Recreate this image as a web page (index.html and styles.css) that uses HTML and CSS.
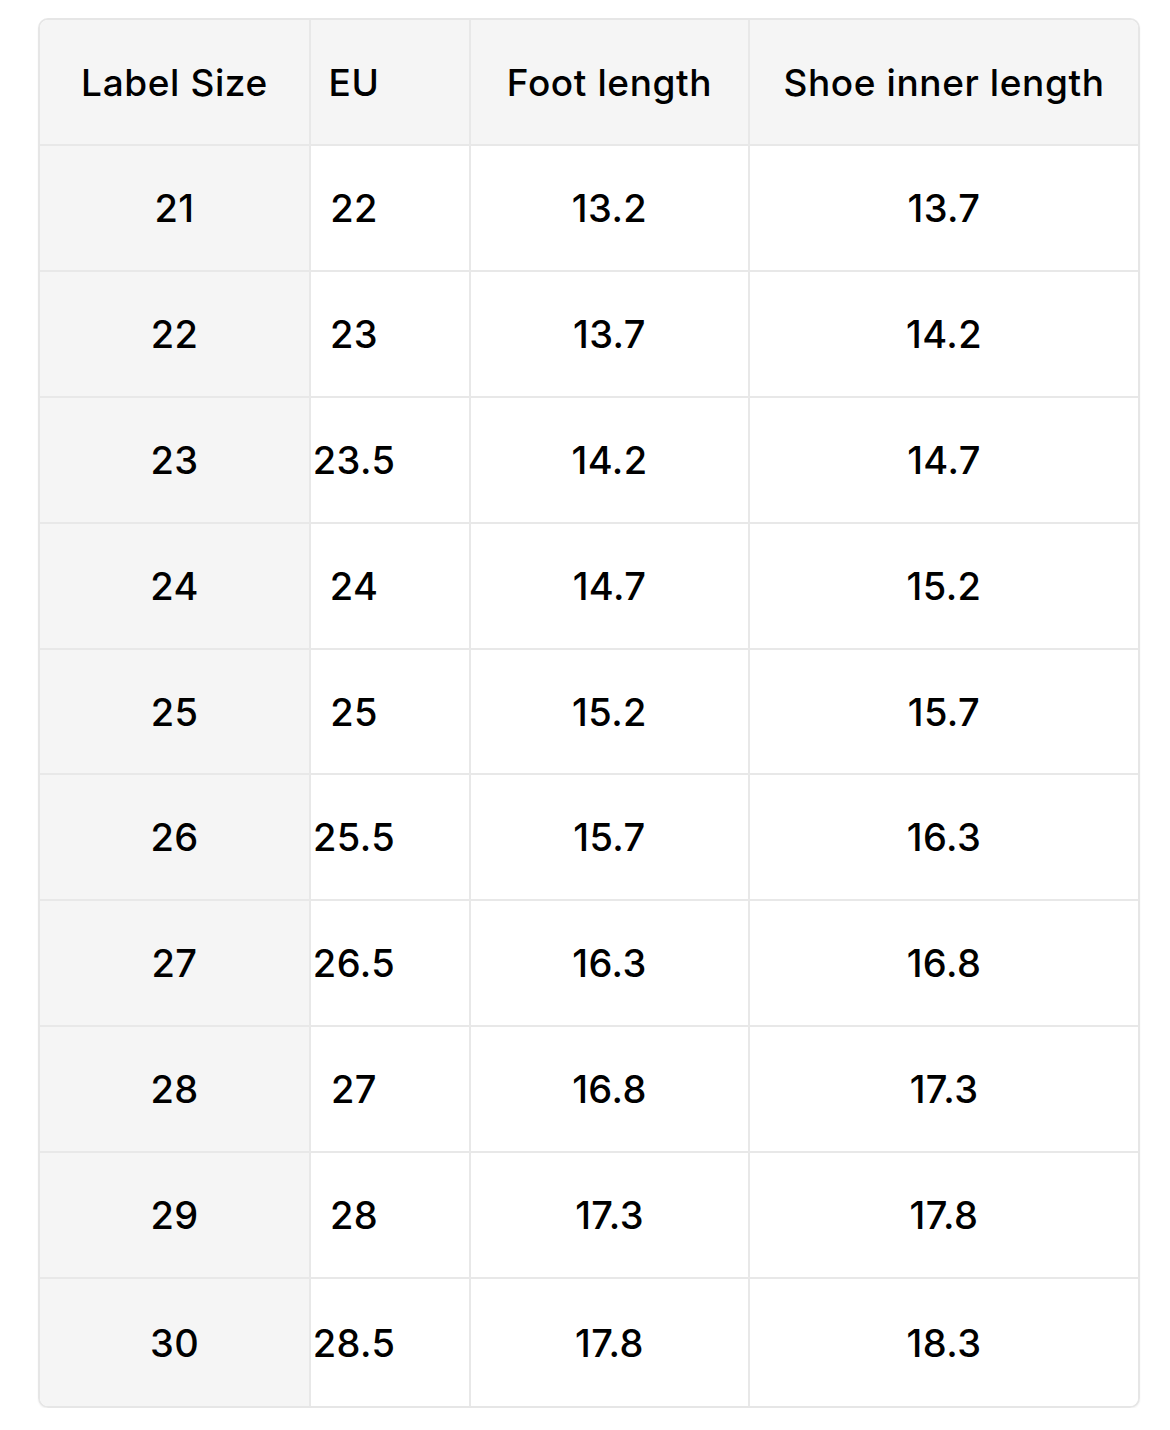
FILE: index.html
```html
<!DOCTYPE html>
<html>
<head>
<meta charset="utf-8">
<link rel="stylesheet" href="styles.css">
</head>
<body>
<div class="page">
  <div class="chart">
    <div class="cell head first">Label Size</div>
    <div class="cell head eu">EU</div>
    <div class="cell head">Foot length</div>
    <div class="cell head last">Shoe inner length</div>

    <div class="cell first">21</div><div class="cell eu">22</div><div class="cell">13.2</div><div class="cell last">13.7</div>
    <div class="cell first">22</div><div class="cell eu">23</div><div class="cell">13.7</div><div class="cell last">14.2</div>
    <div class="cell first">23</div><div class="cell eu">23.5</div><div class="cell">14.2</div><div class="cell last">14.7</div>
    <div class="cell first">24</div><div class="cell eu">24</div><div class="cell">14.7</div><div class="cell last">15.2</div>
    <div class="cell first">25</div><div class="cell eu">25</div><div class="cell">15.2</div><div class="cell last">15.7</div>
    <div class="cell first">26</div><div class="cell eu">25.5</div><div class="cell">15.7</div><div class="cell last">16.3</div>
    <div class="cell first">27</div><div class="cell eu">26.5</div><div class="cell">16.3</div><div class="cell last">16.8</div>
    <div class="cell first">28</div><div class="cell eu">27</div><div class="cell">16.8</div><div class="cell last">17.3</div>
    <div class="cell first">29</div><div class="cell eu">28</div><div class="cell">17.3</div><div class="cell last">17.8</div>
    <div class="cell first lastrow">30</div><div class="cell eu lastrow">28.5</div><div class="cell lastrow">17.8</div><div class="cell last lastrow">18.3</div>
  </div>
</div>
</body>
</html>
```

FILE: styles.css
```css
html, body {
  margin: 0;
  padding: 0;
  background: #ffffff;
}
.page {
  padding: 18px 0 0 38px;
}
.chart {
  width: 1102px;
  box-sizing: border-box;
  border: 2px solid #e6e6e6;
  border-radius: 10px;
  overflow: hidden;
  display: grid;
  grid-template-columns: 271px 160px 279px 388px;
  grid-template-rows: 126px repeat(9, 125.9px) 127px;
  box-shadow: 0 1px 2px rgba(0,0,0,0.06);
  font-family: Inter, "Noto Sans", sans-serif;
  font-size: 38px;
  color: #000000;
}
.cell {
  box-sizing: border-box;
  border-right: 2px solid #e8e8e8;
  border-bottom: 2px solid #e8e8e8;
  display: flex;
  align-items: center;
  justify-content: center;
  background: #ffffff;
  font-weight: 500;
  letter-spacing: 0.4px;
}
.cell.head {
  background: #f5f5f5;
  font-size: 37px;
  letter-spacing: 0.6px;
}
.cell.first {
  background: #f5f5f5;
}
.cell.eu {
  padding-right: 72px;
}
.cell.last {
  border-right: none;
}
.cell.lastrow {
  border-bottom: none;
}
```
